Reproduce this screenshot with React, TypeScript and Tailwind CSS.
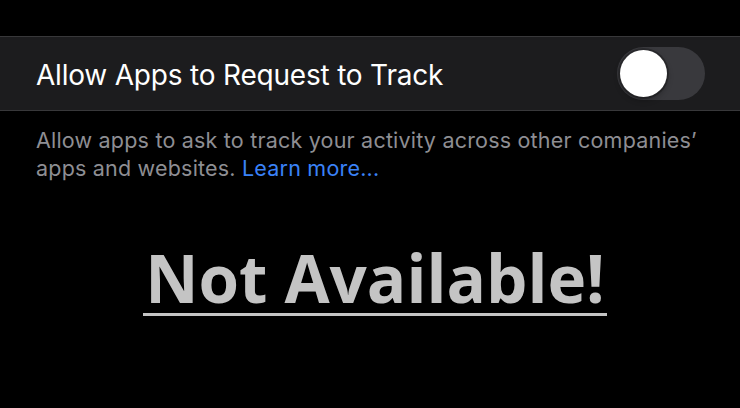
import React from 'react';

function Toggle() {
  return (
    <div className="w-[88px] h-[53px] rounded-full bg-[#39393d] p-[3px] flex items-center shrink-0">
      <div className="w-[47px] h-[47px] rounded-full bg-white shadow-[0_0_0_2px_rgba(0,0,0,0.25),0_3px_6px_rgba(0,0,0,0.3)]" />
    </div>
  );
}

export default function App() {
  return (
    <div className="w-[740px] h-[408px] bg-black overflow-hidden" style={{ fontFamily: 'Inter, Roboto, "Liberation Sans", sans-serif' }}>
      <div className="h-9" />
      <div className="h-[75px] bg-[#1c1c1e] border-y border-[#38383a] flex items-center justify-between pl-9 pr-[35px]">
        <span className="text-[28px] text-white tracking-[-0.2px] pt-[2px]">Allow Apps to Request to Track</span>
        <Toggle />
      </div>
      <p className="pl-9 pr-4 pt-[15px] text-[21.5px] leading-[28px] text-[#8e8e93] tracking-[0.2px]">
        Allow apps to ask to track your activity across other companies’ apps and websites.{' '}
        <span className="text-[#3a82f7]">Learn more...</span>
      </p>
      <div className="flex justify-center pt-[63px] pl-[10px]">
        <span
          className="text-[65.5px] font-bold leading-none text-[#c4c4c4] border-b-[3px] border-[#c4c4c4] px-[2px] pb-[2px]"
          style={{ fontFamily: '"Open Sans", "Liberation Sans", sans-serif' }}
        >
          Not Available!
        </span>
      </div>
    </div>
  );
}
